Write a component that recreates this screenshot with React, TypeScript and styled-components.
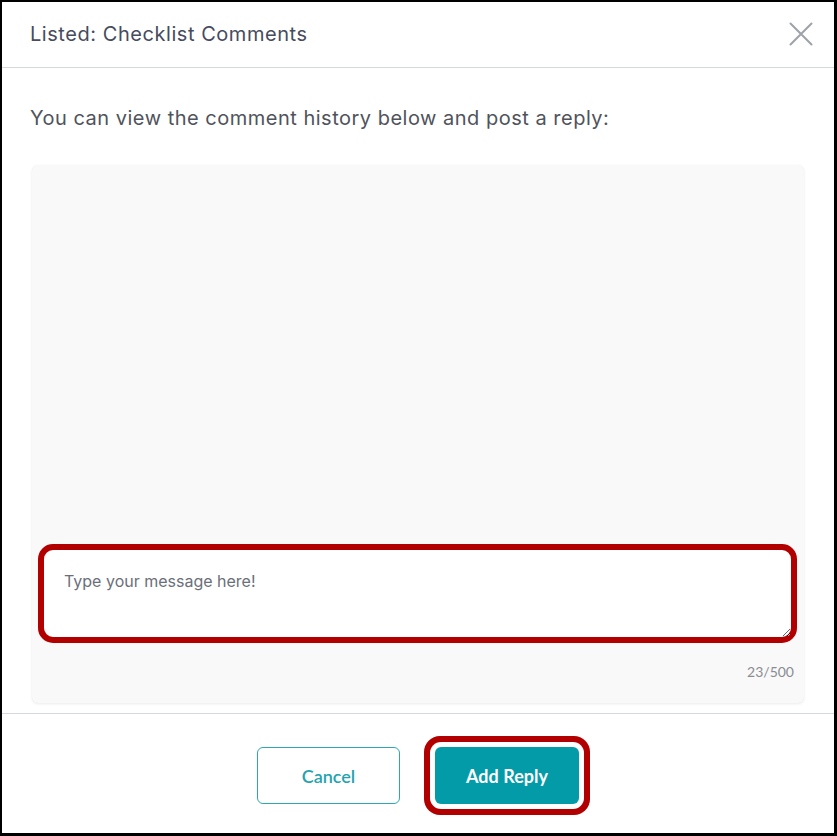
import React from "react";
import styled, { createGlobalStyle } from "styled-components";

const Global = createGlobalStyle`
  html, body { margin: 0; padding: 0; background: #ffffff; }
  body { font-family: "Inter", "Lato", sans-serif; }
  * { box-sizing: border-box; }
`;

const Frame = styled.div`
  width: 837px;
  height: 836px;
  border-style: solid;
  border-color: #000;
  border-width: 2px 3px 3px 2px;
  background: #fff;
  display: flex;
  flex-direction: column;
`;

const Header = styled.header`
  height: 66px;
  flex: none;
  display: flex;
  align-items: center;
  justify-content: space-between;
  padding: 0 21px 0 28px;
  border-bottom: 1px solid #d3d9df;
`;

const Title = styled.h1`
  margin: 0;
  font-family: "Inter", sans-serif;
  font-weight: 400;
  font-size: 20px;
  line-height: 24px;
  color: #464b5e;
  letter-spacing: 0.55px;
  position: relative;
  top: -1px;
`;

const CloseButton = styled.button`
  width: 24px;
  height: 24px;
  padding: 0;
  border: 0;
  background: transparent;
  display: flex;
  align-items: center;
  justify-content: center;
  cursor: pointer;
  position: relative;
  top: -1px;
`;

const Body = styled.main`
  flex: 1;
  display: flex;
  flex-direction: column;
  padding: 38px 30px 10px 28px;
  min-height: 0;
`;

const Intro = styled.p`
  margin: 0 0 35px;
  font-family: "Inter", sans-serif;
  font-size: 20px;
  line-height: 24px;
  color: #50535c;
  letter-spacing: 0.5px;
`;

const Panel = styled.section`
  flex: 1;
  display: flex;
  flex-direction: column;
  background: #f9f9f9;
  border-radius: 6px;
  box-shadow: 0 1px 3px rgba(0, 0, 0, 0.08), 0 0 1px rgba(0, 0, 0, 0.06);
  padding: 0 7px 23px 6px;
  margin-left: 2px;
`;

const History = styled.div`
  flex: 1;
`;

const MessageInput = styled.textarea`
  display: block;
  width: 100%;
  height: 99px;
  border: 6px solid #b20000;
  border-radius: 15px;
  background: #fff;
  padding: 20px 20px;
  font-family: "Inter", sans-serif;
  font-size: 16px;
  line-height: 22px;
  color: #333;
  resize: vertical;
  outline: none;
  &::placeholder {
    color: #6b6f79;
    opacity: 1;
  }
`;

const Counter = styled.div`
  margin-top: 20px;
  text-align: right;
  font-family: "Lato", sans-serif;
  font-size: 14px;
  line-height: 17px;
  color: #8a8c92;
  padding-right: 3px;
`;

const Footer = styled.footer`
  flex: none;
  border-top: 1px solid #d3d9df;
  padding: 33px 0 29px;
  display: flex;
  justify-content: center;
  gap: 35px;
`;

const Button = styled.button<{ $primary?: boolean; $highlight?: boolean }>`
  width: ${(p) => (p.$primary ? 144 : 143)}px;
  height: 57px;
  border-radius: 6px;
  font-family: "Lato", sans-serif;
  font-size: 18px;
  font-weight: ${(p) => (p.$primary ? 700 : 600)};
  cursor: pointer;
  border: ${(p) => (p.$primary ? "0" : "1.5px solid #2fa7b2")};
  background: ${(p) => (p.$primary ? "#039ba8" : "#ffffff")};
  color: ${(p) => (p.$primary ? "#ffffff" : "#24a3ae")};
  box-shadow: ${(p) =>
    p.$highlight ? "0 0 0 5px #ffffff, 0 0 0 11px #b20000" : "none"};
`;

const CloseIcon = () => (
  <svg width="24" height="24" viewBox="0 0 24 24" fill="none">
    <path d="M1.5 1.5 L22.5 22.5 M22.5 1.5 L1.5 22.5" stroke="#9ea2a9" strokeWidth="2" strokeLinecap="round" />
  </svg>
);

export default function App() {
  return (
    <>
      <Global />
      <Frame>
        <Header>
          <Title>Listed: Checklist Comments</Title>
          <CloseButton aria-label="Close">
            <CloseIcon />
          </CloseButton>
        </Header>
        <Body>
          <Intro>You can view the comment history below and post a reply:</Intro>
          <Panel>
            <History />
            <MessageInput placeholder="Type your message here!" />
            <Counter>23/500</Counter>
          </Panel>
        </Body>
        <Footer>
          <Button>Cancel</Button>
          <Button $primary $highlight>
            Add Reply
          </Button>
        </Footer>
      </Frame>
    </>
  );
}
